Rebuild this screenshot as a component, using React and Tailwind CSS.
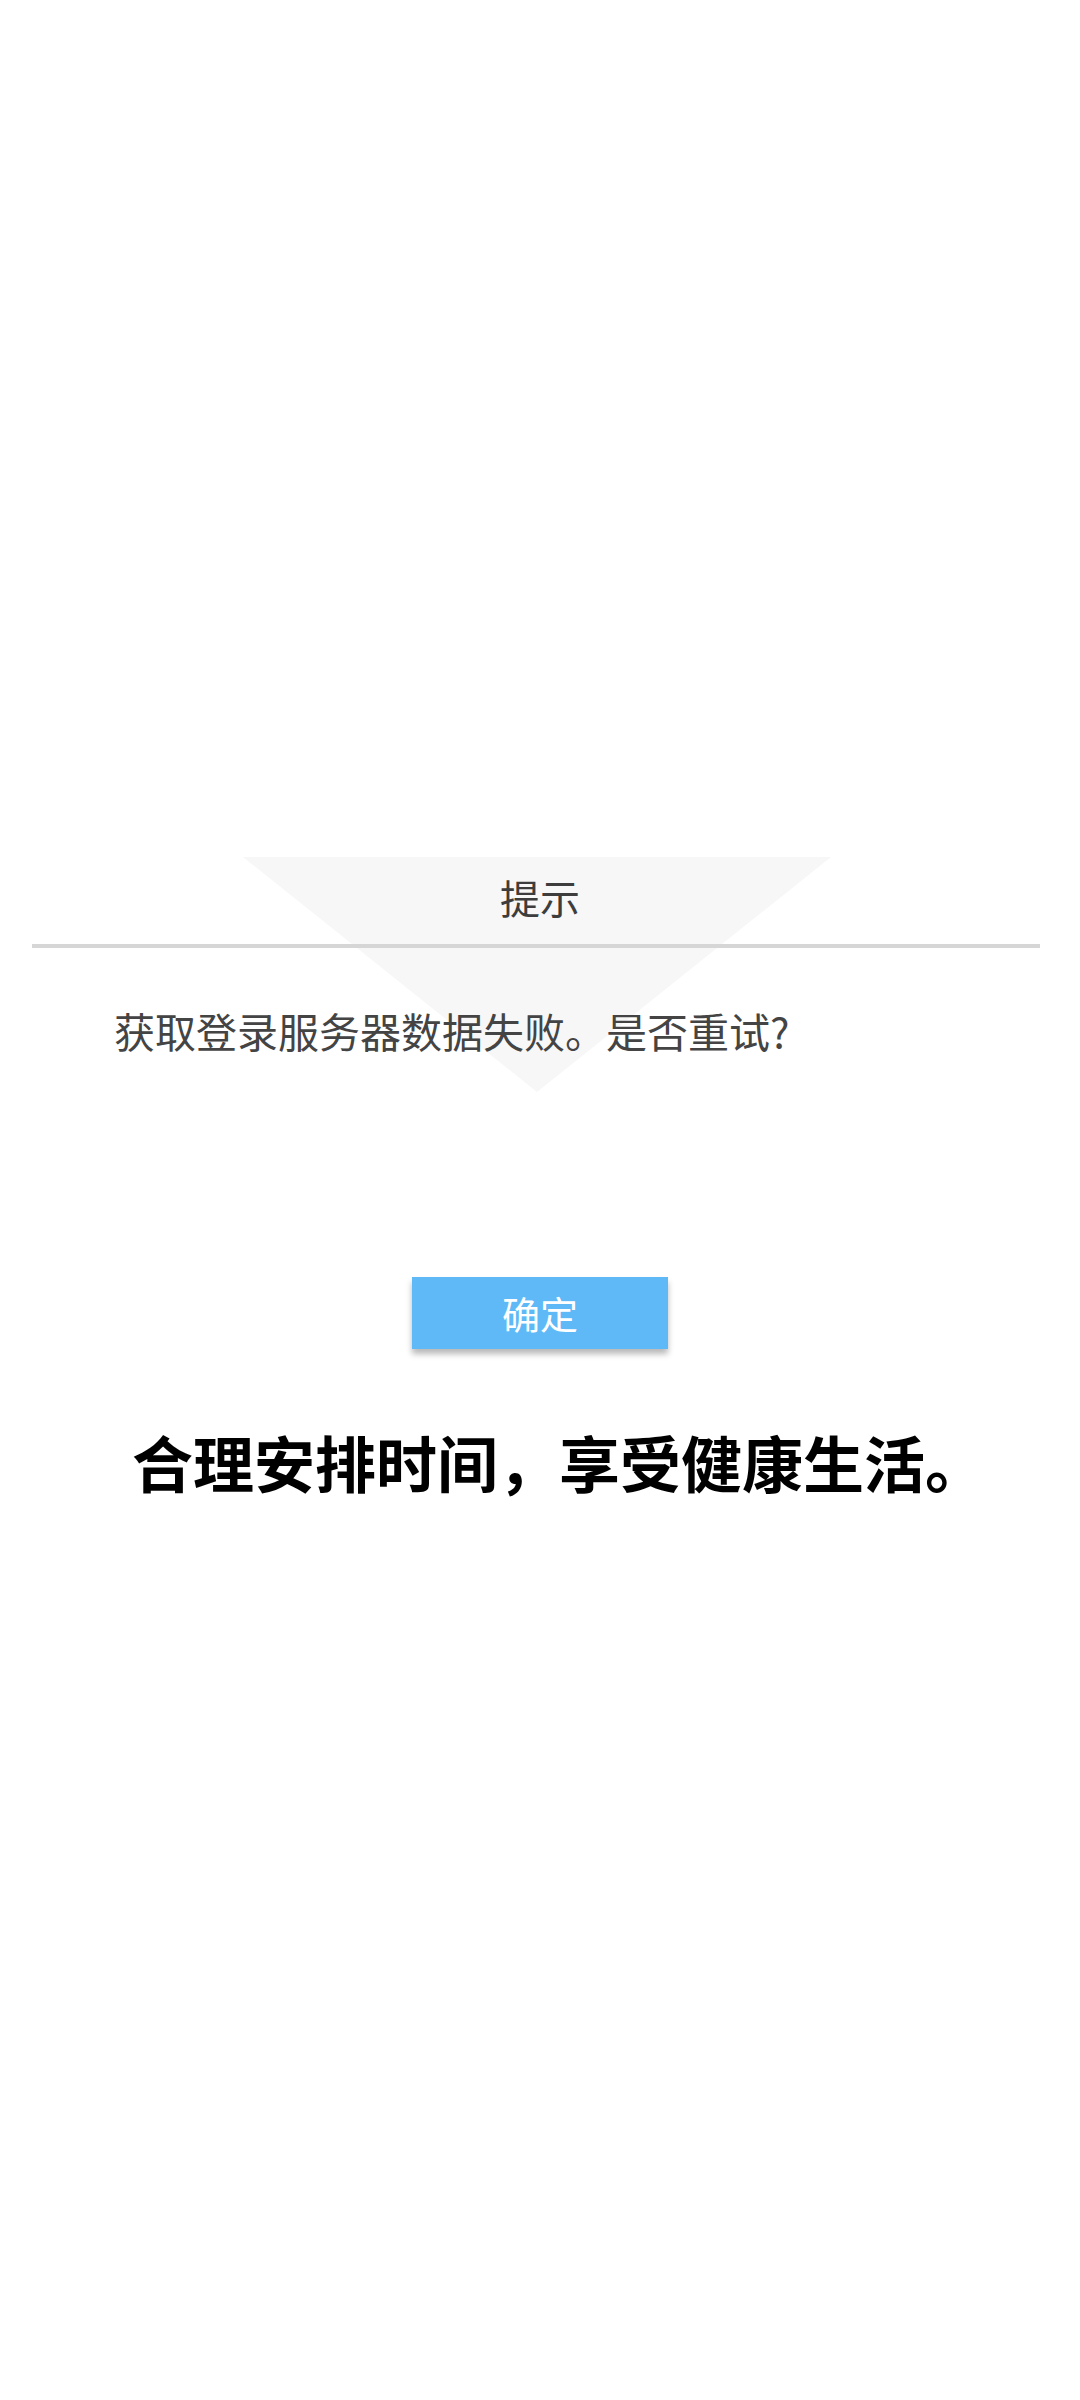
export default function App() {
  const cjk = { fontFamily: '"Noto Sans CJK SC", "Noto Sans", sans-serif' };

  return (
    <div className="min-h-[2400px] w-full bg-white" style={cjk}>
      <div className="pt-[857px]">
        <div className="relative">
          {/* light triangle watermark behind the dialog */}
          <svg
            className="absolute left-[243px] top-0"
            width="588"
            height="235"
            viewBox="0 0 588 235"
          >
            <polygon points="0,0 588,0 294,235" fill="#f7f7f7" />
          </svg>

          <div className="relative">
            <div className="flex h-[87px] items-center justify-center pb-[8px] text-[40px] leading-[52px] text-[#3d3d3d]">
              提示
            </div>
            <div className="ml-[32px] mr-[40px] h-[4px] bg-[#d6d6d6]" />
            <p className="mt-[56px] pl-[114px] text-[41px] leading-[52px] text-[#444444]">
              获取登录服务器数据失败。是否重试?
            </p>
          </div>
        </div>

        <div className="mt-[221px] flex justify-center">
          <button className="flex h-[72px] w-[256px] items-center justify-center bg-[#5fb9f7] text-[38px] leading-none text-white shadow-[0_5px_6px_rgba(0,0,0,0.28)]">
            确定
          </button>
        </div>

        <p className="mt-[75px] pl-[132px] text-[61px] font-bold leading-[76px] text-black">
          合理安排时间，享受健康生活。
        </p>
      </div>
    </div>
  );
}
